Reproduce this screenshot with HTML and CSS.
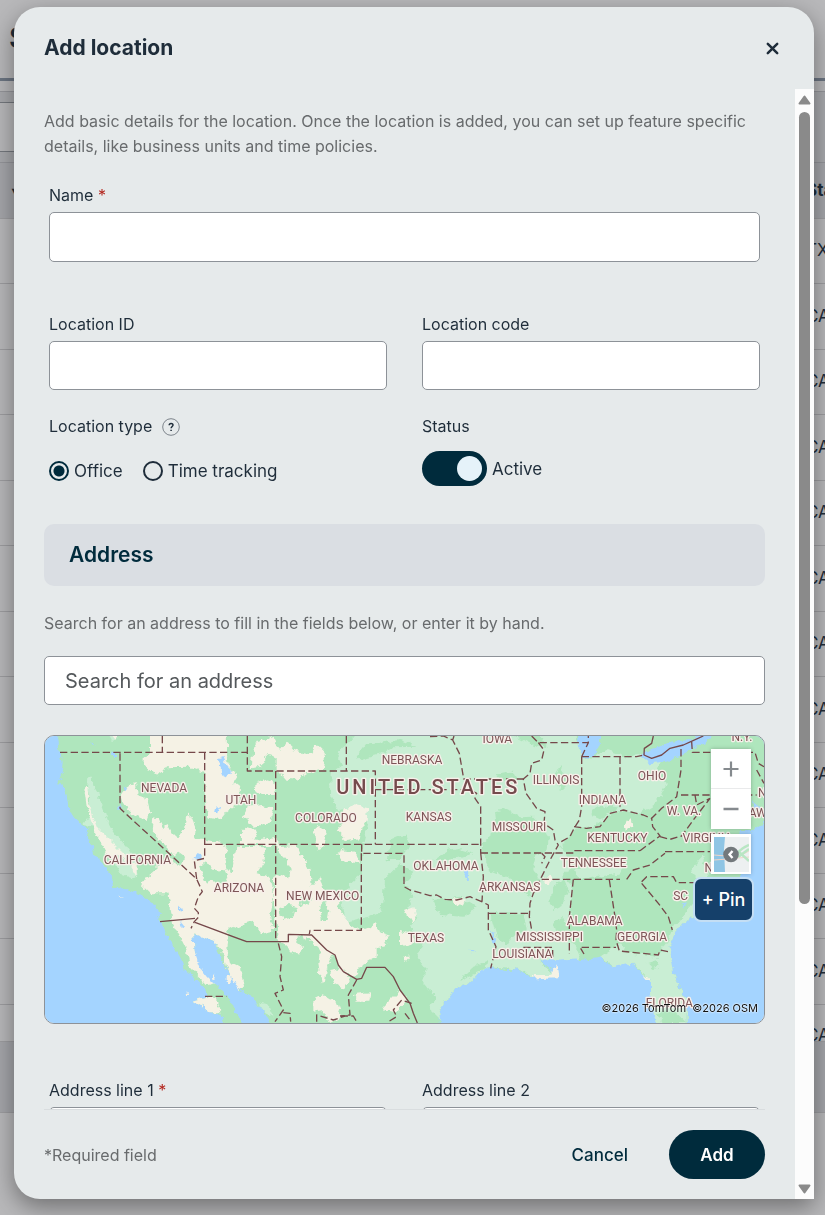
FILE: index.html
```html
<!DOCTYPE html>
<html lang="en">
<head>
<meta charset="utf-8">
<meta name="viewport" content="width=device-width, initial-scale=1">
<title>Add location</title>
<link rel="stylesheet" href="styles.css">
</head>
<body>
<div class="page" aria-hidden="true">
  <div class="page-head">S</div>
  <div class="page-tools"><div class="page-search"></div></div>
  <table class="grid">
    <thead><tr><th><span class="sort">▾</span></th><th>State</th></tr></thead>
    <tbody>
      <tr><td></td><td>TX</td></tr><tr><td></td><td>CA</td></tr><tr><td></td><td>CA</td></tr>
      <tr><td></td><td>CA</td></tr><tr><td></td><td>CA</td></tr><tr><td></td><td>CA</td></tr>
      <tr><td></td><td>CA</td></tr><tr><td></td><td>CA</td></tr><tr><td></td><td>CA</td></tr>
      <tr><td></td><td>CA</td></tr><tr><td></td><td>CA</td></tr><tr><td></td><td>CA</td></tr>
      <tr class="last"><td></td><td>CA</td></tr>
    </tbody>
  </table>
  <div class="page-foot"></div>
</div>

<div class="dialog" role="dialog" aria-labelledby="dialog-title">
  <header class="dialog-head">
    <h1 id="dialog-title">Add location</h1>
    <button class="close" type="button" aria-label="Close">
      <svg width="13" height="13" viewBox="0 0 13 13"><path d="M1.8 1.8l9.4 9.4M11.2 1.8l-9.4 9.4" fill="none" stroke="#1f2d3a" stroke-width="2.5" stroke-linecap="round"/></svg>
    </button>
  </header>
  <form class="dialog-main">
    <div class="dialog-column">
      <div class="content">
        <p class="intro">Add basic details for the location. Once the location is added, you can set up feature specific details, like business units and time policies.</p>
        <div class="fields first">
          <div class="field wide">
            <label for="name">Name <span class="req">*</span></label>
            <input class="box tall" id="name" type="text">
          </div>
        </div>
        <div class="fields second">
          <div class="field"><label for="loc-id">Location ID</label><input class="box" id="loc-id" type="text"></div>
          <div class="field"><label for="loc-code">Location code</label><input class="box" id="loc-code" type="text"></div>
        </div>
        <div class="fields third">
          <fieldset class="choice">
            <legend>Location type
              <svg class="help" width="18" height="20" viewBox="0 -2 18 20"><circle cx="9" cy="9" r="8.300" fill="none" stroke="#7d848b"/><path d="M7.200 7.200c0-2.300 3.800-2.300 3.800-.1 0 1.400-1.900 1.500-1.900 3.200M9.100 11.700v1.400" fill="none" stroke="#1f2d3a" stroke-width="1.500"/></svg>
            </legend>
            <div class="radios">
              <label class="radio"><input type="radio" name="type" checked>Office</label>
              <label class="radio"><input type="radio" name="type">Time tracking</label>
            </div>
          </fieldset>
          <fieldset class="choice">
            <legend>Status</legend>
            <label class="toggle"><input type="checkbox" role="switch" checked>Active</label>
          </fieldset>
        </div>
        <h2 class="section">Address</h2>
        <p class="hint">Search for an address to fill in the fields below, or enter it by hand.</p>
        <input class="box search" type="search" placeholder="Search for an address" aria-label="Search for an address">
        <div class="map">
          <svg class="map-art" viewBox="15 18 2157 861" preserveAspectRatio="xMidYMid slice" role="img" aria-label="Map of the United States">
            <defs>
              <filter id="rough" x="0" y="0" width="100%" height="100%" color-interpolation-filters="sRGB"><feTurbulence type="fractalNoise" baseFrequency="0.05" numOctaves="3" seed="4"/><feDisplacementMap in="SourceGraphic" scale="22" xChannelSelector="R" yChannelSelector="G"/></filter>
            </defs>
            <rect x="0" y="0" width="2200" height="900" fill="#a4d4ff"/>
            <g filter="url(#rough)">
              <path class="mid" d="M50 0L55 60 68 95 65 130 55 155 78 185 85 225 100 260 125 285 145 300 140 320 155 345 165 375 190 400 215 440 220 470 260 478 300 495 335 515 352 540 362 575 375 610 400 645 425 690 430 715 460 740 495 775 500 800 460 812 495 835 505 850 545 855 560 900H1200L1198 845 1210 815 1230 800 1245 775 1280 765 1310 735 1320 720 1345 712 1380 718 1400 720 1430 718 1460 735 1490 742 1520 735 1540 745 1555 740 1530 715 1510 700 1500 695 1540 690 1580 682 1620 688 1680 680 1700 700 1720 712 1745 700 1780 698 1800 725 1830 750 1830 790 1840 830 1850 900H1940V815L1920 770 1900 730 1888 690 1885 650 1905 610 1930 580 1965 560 2010 530 2060 480 2100 440 2110 400 2120 340 2140 300 2160 285 2200 250V0Z"/>
              <path class="light" d="M960 0L930 35 890 68 906 104 872 130 870 195 895 240 960 230 985 280 970 340 965 430 930 460 905 520 915 575 985 560 1025 540 1032 450 1080 400 1120 425 1090 460 1120 500 1100 530 1135 560 1110 590 1150 640 1130 680 1160 720 1150 760 1185 800 1170 840 1200 870 1198 845 1210 815 1230 800 1245 775 1280 765 1310 735 1345 712 1430 718 1490 742 1555 740 1500 695 1620 688 1600 640 1560 620 1590 560 1595 460 1570 440 1600 400 1560 350 1600 300 1660 290 1700 260 1750 240 1800 250 1850 220 1880 160 1850 120 1870 80 1820 70 1760 80 1700 60 1640 90 1600 0Z"/>
              <path class="light" d="M1680 680L1740 640 1760 670 1850 680 1880 640 1900 590 1960 520 2000 530 2040 500 2010 535 1930 580 1905 610 1885 650 1900 730 1940 815V900H1850L1830 790 1830 750 1780 698 1720 712ZM1620 450L1600 420 1680 400 1760 400 1740 430ZM1950 420L1985 380 2010 430 1990 460ZM145 143L155 143 160 170 175 195 190 230 205 280 225 310 260 350 285 390 293 440 275 445 240 430 215 380 190 340 160 290 130 285 150 260 150 200 140 175Z"/>
              <path class="mid" d="M950 80L975 45 1080 30 1130 50 1060 52 1010 75 960 88ZM1320 345L1370 300 1365 240 1400 235 1440 262 1480 260 1515 300 1530 320 1525 355 1490 380 1480 420 1500 450 1470 500 1440 480 1400 440 1350 420 1330 380ZM1350 550L1450 550 1460 600 1420 620 1400 650 1370 620ZM1540 470L1570 440 1585 480 1560 530 1540 540 1530 510ZM1540 580L1570 560 1590 610 1550 620ZM1370 130L1420 125 1430 145 1380 150ZM1560 110L1590 150 1560 180 1540 145ZM1180 390L1220 360 1250 355 1300 370 1240 390ZM1180 510L1260 500 1310 530 1270 560 1200 555ZM1260 750L1300 710 1345 690 1340 715 1300 735ZM1050 330L1100 310 1110 345 1080 390 1040 390ZM1425 18L1500 18 1520 50 1490 50 1460 35ZM1820 700L1850 690 1860 710 1840 720ZM1650 240L1720 220 1740 235 1670 270ZM1850 850L1900 840 1940 879H1870Z"/>
              <path class="light" d="M200 10L230 10 240 30 215 32ZM390 535L430 540 460 570 445 600 410 580ZM655 820L690 828 700 860 670 845Z"/>
              <path class="cream" d="M330 0L560 0 562 100 592 140 580 160 600 175 595 220 560 245 540 270 505 262 495 200 490 125 450 110 375 112 365 135 315 115 310 90 330 70ZM245 195L265 165 285 160 290 195 320 205 330 245 320 270 285 255 265 240 250 215ZM132 170L142 170 150 235 170 290 200 320 240 360 290 410 290 440 265 400 230 370 215 400 185 340 160 290 140 230ZM210 10H240L230 32Z"/>
              <path class="cream" d="M340 262L356 265 368 292 385 285 398 308 415 325 432 300 440 250 455 262 468 295 462 325 500 328 540 335 562 350 560 400 580 380 590 350 675 352 670 400 650 430 690 440 700 500 690 560 700 600 660 610 640 575 610 580 600 615 580 590 560 600 575 640 560 660 570 700 600 715 610 760 580 755 560 715 545 660 530 640 500 628 460 610 465 670 490 715 525 760 500 765 450 710 440 660 420 620 398 580 392 530 385 490 330 490 305 465 322 440 345 420 365 400 390 395 400 370 360 330 335 300ZM500 800L530 805 545 850 505 850 495 835 460 812Z"/>
              <path class="cream" d="M640 60L655 35 700 20 720 60 740 35 760 60 810 75 830 45 855 70 845 120 800 130 770 150 730 145 710 120 710 80 680 75 660 110 635 115ZM650 160L690 148 708 165 700 195 665 195 648 180ZM620 230L665 225 700 235 690 280 640 290 612 260ZM600 310L620 290 650 300 640 330 710 320 720 345 600 345ZM910 240L945 225 985 235 980 270 965 290 960 325 920 330 890 300 905 280ZM822 300L838 285 860 310 850 345 840 360 825 330ZM888 370L905 360 950 370 960 400 920 395Z"/>
              <path class="cream" d="M710 348L770 345 785 380 812 420 815 470 840 440 850 480 895 495 900 540 930 580 960 600 1010 580 1020 610 1050 620 1030 650 1010 650 1010 680 960 710 940 740 905 720 880 670 860 720 855 755 845 760 835 700 840 660 800 620 780 670 760 670 730 640 710 630 700 480ZM870 720L900 715 930 745 915 780 880 760ZM942 795L990 790 985 812 950 812ZM820 810L850 795 890 820 905 860 870 879 850 840 820 845ZM1030 830L1080 780 1100 800 1070 850 1040 845ZM570 710L590 720 612 770 595 778 575 750ZM1080 600L1120 610 1120 640 1080 650ZM1092 540L1120 528 1130 560 1115 580ZM1095 680H1110L1095 700ZM1235 505L1280 505 1270 528 1245 525ZM1508 445L1535 440 1530 465 1512 465ZM1475 735L1530 735 1550 700 1555 745 1490 748ZM1750 280L1775 268 1780 290 1755 302ZM1810 735L1828 745 1826 755Z"/>
              <path class="mid" d="M480 410L500 395 515 415 540 430 555 420 565 440 555 465 520 450 500 460ZM552 380L570 350 580 400 575 430 560 420ZM690 390L712 360 735 385 755 420 750 445 700 430ZM775 520L790 485 810 490 815 515 790 530ZM838 530L855 510 865 540 860 570 845 570ZM765 625L790 615 800 645 780 650ZM395 378L415 368 432 380 425 410 400 400ZM570 600L610 590 620 640 600 710 570 690 562 650ZM715 540L740 525 770 530 760 560 730 570Z"/>
              <path class="water" d="M460 612L480 618 500 628 530 640 538 670 550 700 572 740 600 780 640 805 668 840 705 900H622L590 850 560 800 532 765 520 760 500 740 478 712 465 670ZM1613 0L1617 50 1628 82 1645 88 1668 70 1680 40V0ZM1805 80L1825 60 1860 50 1890 35 1950 30 1990 0H2030L2000 35 1960 55 1920 78 1870 95 1830 100ZM537 85L550 80 560 105 575 118 575 135 555 140 540 110ZM530 228L540 230 535 250 525 248ZM475 370L485 375 482 392 460 388ZM150 37L165 43 162 52ZM218 65H228V78H218ZM250 165L262 175 255 185ZM410 525L430 540 420 548ZM420 570L432 585 425 595ZM232 222H242L240 238H232ZM1272 425L1285 420 1283 450 1270 440ZM1352 600L1368 630 1362 650ZM1285 655L1305 668 1295 670ZM1922 515L1940 520 1935 530ZM2100 300H2140L2120 330 2095 320ZM2135 210L2160 230 2155 260Z"/>
              <path class="cream" d="M232 498L252 500 240 504ZM515 728L528 745 522 748ZM560 738H572V756H560ZM440 785L445 795 441 795Z"/>
            </g>
            <g class="border">
              <path d="M60 67H622M367 18V67M240 70V235L470 447 487 485 475 500 463 535 475 548V562L463 575 453 595M494 67V385L463 392 470 447M494 343H1320M622 18V123H1006V343M707 123V633M919 18V123M1006 179H1290L1310 190 1305 205 1322 230V369M1170 20L1210 18 1238 30 1258 70 1270 140M1238 30L1242 18M1270 147H1370L1450 147M1322 369H1600V362H1800M965 343V370H1092V470L1110 480 1170 497 1190 495 1215 508 1250 510 1290 500 1325 515 1345 525V600L1368 650 1352 715M964 370V601H810L808 612M1322 369L1330 440 1326 515M1346 550H1465"/>
              <path d="M1475 18L1495 38H1645V18M1625 80L1645 38M1495 38L1512 60 1505 90 1475 100 1470 130 1450 147 1458 190 1490 235 1515 245 1512 280 1540 300 1545 330 1555 345 1530 390 1510 430 1500 450 1480 490 1470 520 1468 560 1475 600M1505 370L1515 380 1505 400M1450 652H1538V690M1625 80V230L1618 270 1602 295 1590 320 1558 338M1602 290L1640 295 1680 290 1710 250 1750 240 1810 255 1835 265 1865 235 1910 200 1923 120V50M1625 80H1790L1810 75M1740 80V240M1800 362L1860 318 1838 290 1835 265M1875 365H2010M1860 320L1890 328 1925 318 1960 270 2010 205M1505 448H1740M1760 448L1780 420 1830 405 1875 370M1923 195H2150M1965 195L1970 225 2010 205M1955 35L1957 67H2145L2155 100 2172 110M2150 120L2172 160M1805 455L1820 440H1900L1910 458H1980M1805 460L1855 520 1885 560 1897 600M1708 450L1725 560 1730 600 1728 630 1738 663 1855 675 1860 660 1885 665M1600 448L1588 560V672M1625 652H1728M1622 655L1632 672M715 640L725 680 720 740 730 780 705 790 730 840 705 875M730 848L750 850 752 875M950 750L925 795 930 855 900 858M830 875V855L880 870 915 858 940 858 950 875M1115 820L1085 810 1060 840 1070 860 1045 875M1095 850L1110 870M495 799H560"/>
              <path class="solid" d="M360 575L465 565M465 577L620 635H745V613L815 615 830 630 860 660 885 675 895 705 910 725 950 748 965 745 980 712 1035 712 1060 740 1080 780 1110 820 1120 850 1132 879M1840 18L1835 40 1813 55 1812 75 1835 85 1865 75 1890 55 1930 45 1990 18"/>
            </g>
            <g class="names">
              <text x="372" y="187">NEVADA</text><text x="603" y="221">UTAH</text><text x="858" y="276">COLORADO</text><text x="292" y="401">CALIFORNIA</text><text x="597" y="487">ARIZONA</text><text x="848" y="509">NEW MEXICO</text>
              <text x="1116" y="101">NEBRASKA</text><text x="1372" y="38">IOWA</text><text x="1548" y="161">ILLINOIS</text><text x="1166" y="273">KANSAS</text><text x="1437" y="303">MISSOURI</text><text x="1218" y="419">OKLAHOMA</text><text x="1409" y="483">ARKANSAS</text><text x="1158" y="636">TEXAS</text><text x="1528" y="633">MISSISSIPPI</text><text x="1447" y="685">LOUISIANA</text>
              <text x="1687" y="221">INDIANA</text><text x="1836" y="150">OHIO</text><text x="1732" y="337">KENTUCKY</text><text x="1661" y="412">TENNESSEE</text><text x="1932" y="254">W. VA.</text><text x="2002" y="337">VIRGINIA</text><text x="1922" y="509">SC</text><text x="2018" y="425">NC</text><text x="1664" y="585">ALABAMA</text><text x="1806" y="633">GEORGIA</text><text x="1888" y="831">FLORIDA</text><text x="2106" y="33">N.Y.</text><text x="2186" y="200">N.J.</text><text x="2154" y="262">DELAWARE</text>
              <text class="country" x="1165" y="192">UNITED STATES</text>
            </g>
          </svg>
          <div class="map-tools">
            <div class="zoom">
              <button type="button" aria-label="Zoom in"><svg width="16" height="16" viewBox="0 0 16 16"><path d="M8 .5v15M.5 8h15" stroke="#858a8e" stroke-width="2.200"/></svg></button>
              <button type="button" aria-label="Zoom out"><svg width="16" height="16" viewBox="0 0 16 16"><path d="M.5 8h15" stroke="#858a8e" stroke-width="2.500"/></svg></button>
            </div>
            <button class="layers" type="button" aria-label="Map style">
              <svg width="35" height="35" viewBox="0 0 35 35"><path fill="#edf0f1" d="M0 0h35v35H0z"/><path fill="#8fc5e4" d="M0 0h11l-1 12 1 23H0z"/><path fill="none" stroke="#f0d5c8" d="M0 18l12 1 12 1 11-6M0 23l14-1 21-2"/><path fill="none" stroke="#b9e6c4" stroke-width="2.500" d="M22 17q6-6 13-9M24 20l11-8M24 14l11 10"/><circle cx="17" cy="17.500" r="7.800" fill="#73797c"/><path d="M18.500 14l-3 3.500 3 3.500" fill="none" stroke="#fff" stroke-width="2.400"/></svg>
            </button>
          </div>
          <button class="pin" type="button">+ Pin</button>
          <span class="credit">©2026 TomTom&nbsp; ©2026 OSM</span>
        </div>
        <div class="fields last-fields">
          <div class="field"><label for="line1">Address line 1 <span class="req">*</span></label><input class="box" id="line1" type="text"></div>
          <div class="field"><label for="line2">Address line 2</label><input class="box" id="line2" type="text"></div>
        </div>
      </div>
      <footer class="actions">
        <span class="note">*Required field</span>
        <button class="cancel" type="button">Cancel</button>
        <button class="add" type="submit">Add</button>
      </footer>
    </div>
    <div class="scrollbar" aria-hidden="true">
      <svg width="13" height="10" viewBox="0 0 13 10"><path d="M6.500 1.500l5 7h-10z" fill="#8a8a8a" stroke="#8a8a8a" stroke-width="2" stroke-linejoin="round"/></svg>
      <div class="track"><div class="thumb"></div></div>
      <svg width="13" height="10" viewBox="0 0 13 10"><path d="M6.500 8.500l5-7h-10z" fill="#8a8a8a" stroke="#8a8a8a" stroke-width="2" stroke-linejoin="round"/></svg>
    </div>
  </form>
</div>
</body>
</html>
```
FILE: styles.css
```css
* { box-sizing: border-box; }
body {
  margin: 0;
  height: 100vh;
  overflow: hidden;
  background: #b8b8ba;
  color: #1f2d3a;
  font-family: Inter, "Liberation Sans", sans-serif;
  font-size: 16px;
  line-height: 24px;
}
button, input { font: inherit; color: inherit; }
button { border: 0; background: none; padding: 0; cursor: pointer; }
h1, h2, p, fieldset, legend { margin: 0; padding: 0; border: 0; }

/* Page behind the dialog */
.page { display: flex; flex-direction: column; height: 100%; }
.page-head {
  height: 81px;
  padding: 20px 9px;
  border-bottom: 3px solid #6c7582;
  font-size: 28px;
  line-height: 36px;
  font-weight: 600;
}
.page-tools {
  height: 72px;
  margin-top: 10px;
  padding: 10px 400px 10px 0;
  border: solid #94959a;
  border-width: 1px 0;
  background: #a8a9ad;
}
.page-search { height: 50px; border: solid #74787e; border-width: 1px 0; background: #b8b8ba; }
.grid { width: 100%; table-layout: fixed; border-collapse: collapse; }
.grid th, .grid td { padding: 0 0 1px; border-bottom: 1px solid #9d9da0; font-size: 17px; text-align: left; white-space: nowrap; }
.grid th { height: 55px; padding: 0; background: #a5a6aa; }
.grid th:last-child { width: 19px; }
.grid td { height: 65px; }
.grid tr:nth-child(even) td { height: 66px; }
.grid .last td { height: 37px; padding: 0; line-height: 12px; vertical-align: bottom; }
.sort { padding-left: 12px; font-size: 12px; }
.page-foot { height: 71px; background: #a5a6aa; border-bottom: 1px solid #9d9da0; }

/* Dialog */
.dialog {
  position: fixed;
  inset: 7px 11px 16px 14px;
  display: flex;
  flex-direction: column;
  border-radius: 26px 26px 0 26px;
  background: #e6eaeb;
  box-shadow: 0 8px 24px rgba(0, 0, 0, .4);
  overflow: hidden;
}
.dialog-head { display: flex; justify-content: space-between; align-items: center; height: 82px; padding: 0 35px 0 30px; flex: none; }
h1, h2 { font-size: 21px; line-height: 26px; font-weight: 600; }
h1 { font-weight: 700; }
.close { display: flex; }
.dialog-main { display: flex; flex: 1; min-height: 0; }
.dialog-column { display: flex; flex-direction: column; flex: 1; min-width: 0; }
.content { flex: 1; min-height: 0; overflow: hidden; padding: 20px 30px 0; }
.intro, .hint { color: #686b6d; line-height: 25px; }
.fields { display: grid; grid-template-columns: 1fr 1fr; gap: 35px; padding: 0 5px; }
.first { margin-top: 24px; }
.second { margin-top: 50px; }
.third { margin-top: 24px; }
.last-fields { margin-top: 54px; }
.field { display: flex; flex-direction: column; gap: 5px; min-width: 0; }
.wide { grid-column: 1 / -1; }
.req { color: #b3261e; }
.box {
  width: 100%;
  height: 49px;
  padding: 0 20px;
  border: 1px solid #8d9298;
  border-radius: 5px;
  background: #fff;
  flex: none;
}
.tall { height: 50px; }
.choice { min-width: 0; }
legend { display: flex; align-items: center; gap: 10px; height: 24px; }
.radios { display: flex; align-items: center; gap: 20px; height: 40px; margin-top: 13px; font-size: 17px; }
.radio { display: flex; align-items: center; gap: 5px; }
.radio input {
  appearance: none;
  width: 20px;
  height: 20px;
  margin: 0;
  border: 2px solid #1f2d3a;
  border-radius: 50%;
}
.radio input:checked { border-color: #002b3c; background: radial-gradient(circle, #002b3c 5px, transparent 6px); }
.toggle { display: flex; align-items: center; gap: 5px; height: 35px; margin-top: 13px; font-size: 17px; }
.toggle input {
  appearance: none;
  display: flex;
  justify-content: flex-end;
  align-items: center;
  width: 65px;
  height: 35px;
  margin: 0;
  padding: 5px;
  border-radius: 18px;
  background: #002b3c;
}
.toggle input::before { content: ""; width: 25px; height: 25px; border-radius: 50%; background: #e5f2f9; }
.section {
  margin-top: 33px;
  padding: 18px 25px;
  border-radius: 10px;
  background: #dadee3;
  color: #002b3c;
}
.hint { margin-top: 25px; }
.search { display: block; margin-top: 20px; font-size: 20px; }
.search::placeholder { color: #55595c; opacity: 1; }

/* Map */
.map {
  position: relative;
  height: 289px;
  margin-top: 30px;
  border: 1px solid #8d9298;
  border-radius: 10px;
  overflow: hidden;
}
.map-art { display: block; width: 100%; height: 100%; }
.water { fill: #a4d4ff; }
.mid { fill: #afe6bd; }
.light { fill: #c9eed4; }
.cream { fill: #f5f2e5; }
.border path { fill: none; stroke: #75484a; stroke-width: 4; stroke-dasharray: 22 10; stroke-linejoin: round; }
.border .solid { stroke-dasharray: none; }
.names text {
  fill: #7d5557;
  stroke: #f8efea;
  stroke-width: 8;
  stroke-linejoin: round;
  paint-order: stroke;
  font: 400 36px Roboto, sans-serif;
  text-anchor: middle;
}
.names .country { font-size: 60px; font-weight: 500; fill: #754b4d; letter-spacing: 9px; }
.map-tools { position: absolute; top: 13px; right: 13px; display: flex; flex-direction: column; gap: 5px; }
.zoom { box-shadow: 0 0 4px rgba(0, 0, 0, .25); background: #fff; }
.zoom button { display: grid; place-items: center; width: 40px; height: 40px; }
.zoom button + button { box-shadow: 0 -1px #e9eaeb; }
.layers { display: grid; place-items: center; width: 40px; height: 40px; background: #fff; box-shadow: 0 0 4px rgba(0, 0, 0, .25); }
.pin {
  position: absolute;
  top: 141px;
  right: 10px;
  width: 61px;
  height: 45px;
  border: 2px solid #c4def4;
  border-radius: 8px;
  background: #15406a;
  color: #fff;
  font-size: 18px;
  font-weight: 500;
}
.credit {
  position: absolute;
  right: 6px;
  bottom: 7px;
  color: #111;
  font-size: 11px;
  line-height: 16px;
  text-shadow: 0 0 2px #fff, 0 0 2px #fff;
}

/* Footer */
.actions {
  display: flex;
  align-items: center;
  height: 90px;
  margin: 0 30px;
  border-top: 1px solid #d9dddf;
  flex: none;
}
.note { flex: 1; color: #686b6d; }
.cancel { margin-right: 41px; color: #002b3c; font-size: 17px; font-weight: 500; }
.add { width: 96px; height: 49px; border-radius: 25px; background: #002b3c; color: #fff; font-size: 17px; font-weight: 600; }

.scrollbar {
  display: flex;
  flex-direction: column;
  align-items: center;
  gap: 7px;
  width: 19px;
  padding: 6px 0 5px;
  background: #fcfcfc;
  flex: none;
}
.track { display: flex; flex: 1; width: 11px; }
.thumb { width: 100%; height: 74.4%; border-radius: 6px; background: #8a8a8a; }
```
